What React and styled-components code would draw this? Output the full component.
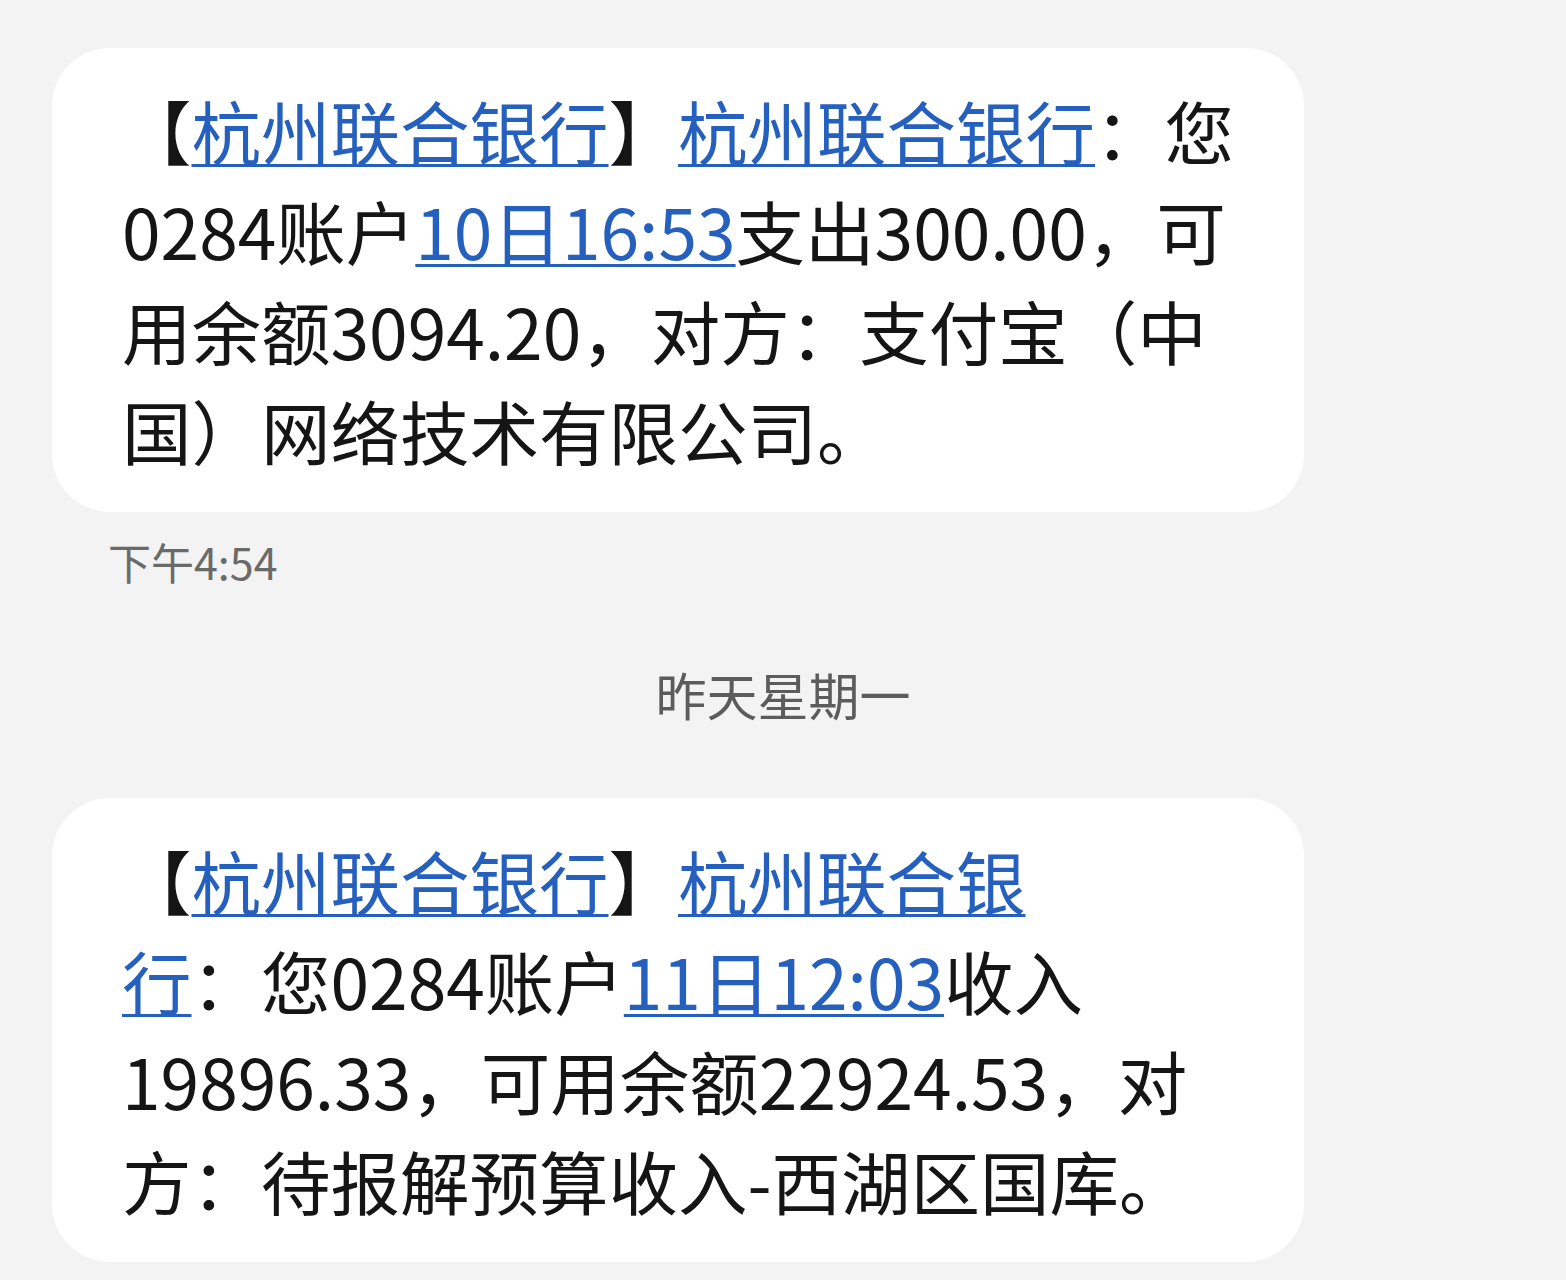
import React from "react";
import styled, { createGlobalStyle } from "styled-components";

const Global = createGlobalStyle`
  html, body {
    margin: 0;
    padding: 0;
    background: #f3f3f3;
  }
  body {
    font-family: "Noto Sans CJK SC", "Noto Sans", sans-serif;
  }
`;

const Thread = styled.main`
  width: 1566px;
  min-height: 1280px;
  box-sizing: border-box;
  padding: 48px 0 0 52px;
  display: flex;
  flex-direction: column;
  align-items: flex-start;
  background: #f3f3f3;
`;

const Bubble = styled.div`
  width: 1252px;
  box-sizing: border-box;
  padding: 32px 70px 32px 70px;
  background: #ffffff;
  border-radius: 58px;
  color: #151515;
  font-size: 69.5px;
  line-height: 100px;
  letter-spacing: 0;
`;

const Line = styled.div`
  white-space: nowrap;
`;

const Link = styled.span`
  color: #2660bf;
  text-decoration: underline;
  text-decoration-color: #2660bf;
  text-decoration-thickness: 3px;
  text-underline-offset: 4px;
`;

const Time = styled.div`
  margin: 24px 0 0 56px;
  font-size: 43px;
  line-height: 50px;
  color: #6a6a6a;
`;

const DayDivider = styled.div`
  align-self: stretch;
  margin: 78px 52px 0 0;
  text-align: center;
  font-size: 51px;
  line-height: 60px;
  color: #5c5c5c;
`;

const Spacer = styled.div`
  height: 74px;
`;

export default function App() {
  return (
    <>
      <Global />
      <Thread>
        <Bubble>
          <Line>
            【<Link>杭州联合银行</Link>】<Link>杭州联合银行</Link>：您
          </Line>
          <Line>
            0284账户<Link>10日16:53</Link>支出300.00，可
          </Line>
          <Line>用余额3094.20，对方：支付宝（中</Line>
          <Line>国）网络技术有限公司。</Line>
        </Bubble>
        <Time>下午4:54</Time>
        <DayDivider>昨天星期一</DayDivider>
        <Spacer />
        <Bubble>
          <Line>
            【<Link>杭州联合银行</Link>】<Link>杭州联合银</Link>
          </Line>
          <Line>
            <Link>行</Link>：您0284账户<Link>11日12:03</Link>收入
          </Line>
          <Line>19896.33，可用余额22924.53，对</Line>
          <Line>方：待报解预算收入-西湖区国库。</Line>
        </Bubble>
      </Thread>
    </>
  );
}
